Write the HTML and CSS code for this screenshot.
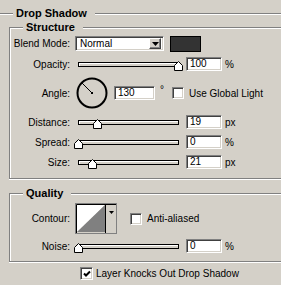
FILE: index.html
```html
<!DOCTYPE html>
<html>
<head>
<meta charset="utf-8">
<link rel="stylesheet" href="styles.css">
</head>
<body>
<div class="group outer">
  <div class="legend legend-main">Drop Shadow</div>

  <div class="group structure">
    <div class="legend legend-sub">Structure</div>

    <div class="row row-blend">
      <span class="label">Blend Mode:</span>
      <div class="select">
        <span class="select-value">Normal</span>
        <span class="select-btn"><svg width="7" height="4" viewBox="0 0 7 4"><polygon points="0,0 7,0 3.5,4" fill="#000"/></svg></span>
      </div>
      <span class="swatch"></span>
    </div>

    <div class="row row-slider row-opacity">
      <span class="label">Opacity:</span>
      <div class="slider">
        <div class="track"></div>
        <svg class="thumb" style="left:96px" width="9" height="10" viewBox="0 0 9 10"><polygon points="4.5,0.5 8.5,4.5 8.5,9.5 0.5,9.5 0.5,4.5" fill="#fff" stroke="#000" stroke-width="1"/></svg>
      </div>
      <span class="field">100</span><span class="unit">%</span>
    </div>

    <div class="row row-angle">
      <span class="label">Angle:</span>
      <svg class="dial" width="32" height="32" viewBox="0 0 32 32">
        <circle cx="16" cy="16" r="14.5" fill="none" stroke="#000" stroke-width="2"/>
        <line x1="16" y1="16" x2="5" y2="5" stroke="#000" stroke-width="1"/>
        <rect x="15" y="15" width="2" height="2" fill="#000"/>
      </svg>
      <span class="field field-angle">130</span>
      <span class="degree">°</span>
      <span class="check"></span>
      <span class="check-label">Use Global Light</span>
    </div>

    <div class="row row-slider">
      <span class="label">Distance:</span>
      <div class="slider">
        <div class="track"></div>
        <svg class="thumb" style="left:15px" width="9" height="10" viewBox="0 0 9 10"><polygon points="4.5,0.5 8.5,4.5 8.5,9.5 0.5,9.5 0.5,4.5" fill="#fff" stroke="#000" stroke-width="1"/></svg>
      </div>
      <span class="field">19</span><span class="unit">px</span>
    </div>

    <div class="row row-slider">
      <span class="label">Spread:</span>
      <div class="slider">
        <div class="track"></div>
        <svg class="thumb" style="left:-4px" width="9" height="10" viewBox="0 0 9 10"><polygon points="4.5,0.5 8.5,4.5 8.5,9.5 0.5,9.5 0.5,4.5" fill="#fff" stroke="#000" stroke-width="1"/></svg>
      </div>
      <span class="field">0</span><span class="unit">%</span>
    </div>

    <div class="row row-slider">
      <span class="label">Size:</span>
      <div class="slider">
        <div class="track"></div>
        <svg class="thumb" style="left:10px" width="9" height="10" viewBox="0 0 9 10"><polygon points="4.5,0.5 8.5,4.5 8.5,9.5 0.5,9.5 0.5,4.5" fill="#fff" stroke="#000" stroke-width="1"/></svg>
      </div>
      <span class="field">21</span><span class="unit">px</span>
    </div>
  </div>

  <div class="group quality">
    <div class="legend legend-sub">Quality</div>

    <div class="row row-contour">
      <span class="label">Contour:</span>
      <svg class="contour" width="42" height="31" viewBox="0 0 42 31">
        <rect x="0" y="0" width="42" height="31" fill="#d4d0c8"/>
        <polygon points="2,2 30,2 2,29" fill="#fff"/>
        <polygon points="30,2 30,29 2,29" fill="#808080"/>
        <rect x="0.5" y="0.5" width="41" height="30" fill="none" stroke="#808080"/>
        <polyline points="1.5,30 1.5,1.5 41,1.5" fill="none" stroke="#000"/>
        <line x1="30.5" y1="2" x2="30.5" y2="30" stroke="#000"/>
        <polygon points="34,8 39,8 36.5,11" fill="#000"/>
      </svg>
      <span class="check check-aa"></span>
      <span class="check-label">Anti-aliased</span>
    </div>

    <div class="row row-slider row-noise">
      <span class="label">Noise:</span>
      <div class="slider">
        <div class="track"></div>
        <svg class="thumb" style="left:-4px" width="9" height="10" viewBox="0 0 9 10"><polygon points="4.5,0.5 8.5,4.5 8.5,9.5 0.5,9.5 0.5,4.5" fill="#fff" stroke="#000" stroke-width="1"/></svg>
      </div>
      <span class="field">0</span><span class="unit">%</span>
    </div>
  </div>

  <div class="row row-knock">
    <span class="check checked"><svg width="8" height="8" viewBox="0 0 8 8"><polyline points="1,3.5 3,5.5 7,1.5" fill="none" stroke="#000" stroke-width="2"/></svg></span>
    <span class="check-label">Layer Knocks Out Drop Shadow</span>
  </div>
</div>
</body>
</html>
```

FILE: styles.css
```css
* { box-sizing: border-box; }

html, body {
  margin: 0;
  padding: 0;
}

body {
  width: 281px;
  height: 285px;
  overflow: hidden;
  background: #d4d0c8;
  font-family: "Liberation Sans", Arial, sans-serif;
  font-size: 10px;
  color: #000;
}

.group {
  border: 1px solid #808080;
  box-shadow: 1px 1px 0 #fff, inset 1px 1px 0 #fff;
}

/* the panel continues past the cropped right / left / bottom edges */
.outer {
  margin: 13px 0 0 0;
  width: 281px;
  height: 272px;
  border-left: none;
  border-right: none;
  border-bottom: none;
  box-shadow: inset 0 1px 0 #fff;
}

.legend {
  width: max-content;
  background: #d4d0c8;
  font-weight: bold;
  font-size: 11px;
  line-height: 14px;
  margin-top: -8px;
  padding: 0 8px 0 3px;
}

.legend-main { margin-left: 13px; }
.legend-sub { margin-left: 13px; }

.structure,
.quality {
  margin-left: 9px;
  width: 272px;
  border-right: none;
  box-shadow: 0 1px 0 #fff, inset 1px 1px 0 #fff;
}

.structure {
  margin-top: 7px;
  padding-bottom: 9px;
}

.quality {
  margin-top: 14px;
  padding-bottom: 8px;
}

.row {
  display: flex;
  align-items: center;
  white-space: nowrap;
}

.label {
  flex: none;
  width: 60px;
  text-align: right;
}

/* sunken frame */
.field, .select, .check {
  background: #fff;
  border-top: 1px solid #808080;
  border-left: 1px solid #808080;
  border-bottom: 1px solid #fff;
  border-right: 1px solid #fff;
  box-shadow: inset 1px 1px 0 #404040, inset -1px -1px 0 #d4d0c8;
}

.row-blend { margin-top: 2px; height: 15px; }

.select {
  margin-left: 5px;
  width: 89px;
  height: 15px;
  display: flex;
  align-items: center;
  padding: 2px;
}

.select-value {
  flex: 1;
  padding-left: 2px;
  line-height: 11px;
}

.select-btn {
  width: 12px;
  height: 11px;
  background: #d4d0c8;
  border-top: 1px solid #fff;
  border-left: 1px solid #fff;
  border-right: 1px solid #404040;
  border-bottom: 1px solid #404040;
  box-shadow: inset -1px -1px 0 #808080;
  display: flex;
  align-items: center;
  justify-content: center;
}

.select-btn svg { display: block; }

.swatch {
  margin-left: 6px;
  width: 31px;
  height: 16px;
  background: #333;
  border: 1px solid #000;
}

.row-slider { height: 14px; margin-top: 6px; }

.slider {
  position: relative;
  margin-left: 8px;
  width: 101px;
  align-self: stretch;
  padding-top: 5px;
}

.track {
  height: 5px;
  border: 1px solid #000;
  background: #d4d0c8;
  box-shadow: inset 1px 1px 0 #fff;
}

.thumb {
  position: absolute;
  top: 4px;
  display: block;
}

.field {
  margin-left: 7px;
  width: 36px;
  height: 14px;
  padding: 0 3px;
  line-height: 12px;
}

.unit { margin-left: 3px; }

.row-angle { margin-top: 6px; height: 32px; }

.dial {
  display: block;
  margin-left: 6px;
  flex: none;
}

.field-angle {
  margin-left: 6px;
  width: 41px;
}

.degree {
  align-self: flex-start;
  margin: 7px 0 0 5px;
  line-height: 12px;
}

.check {
  flex: none;
  width: 12px;
  height: 12px;
  margin-left: 8px;
  display: flex;
  align-items: center;
  justify-content: center;
}

.check svg { display: block; }

.check-label { margin-left: 5px; }

.row-contour { margin-top: 3px; height: 31px; }

.contour {
  display: block;
  margin-left: 5px;
  flex: none;
}

.check-aa { margin-left: 13px; }

.row-noise { margin-top: 5px; }

.row-knock {
  margin: 5px 0 0 80px;
  height: 13px;
}

.row-knock .check { margin-left: 0; width: 13px; height: 13px; }
.row-knock .check-label { margin-left: 3px; }
```
